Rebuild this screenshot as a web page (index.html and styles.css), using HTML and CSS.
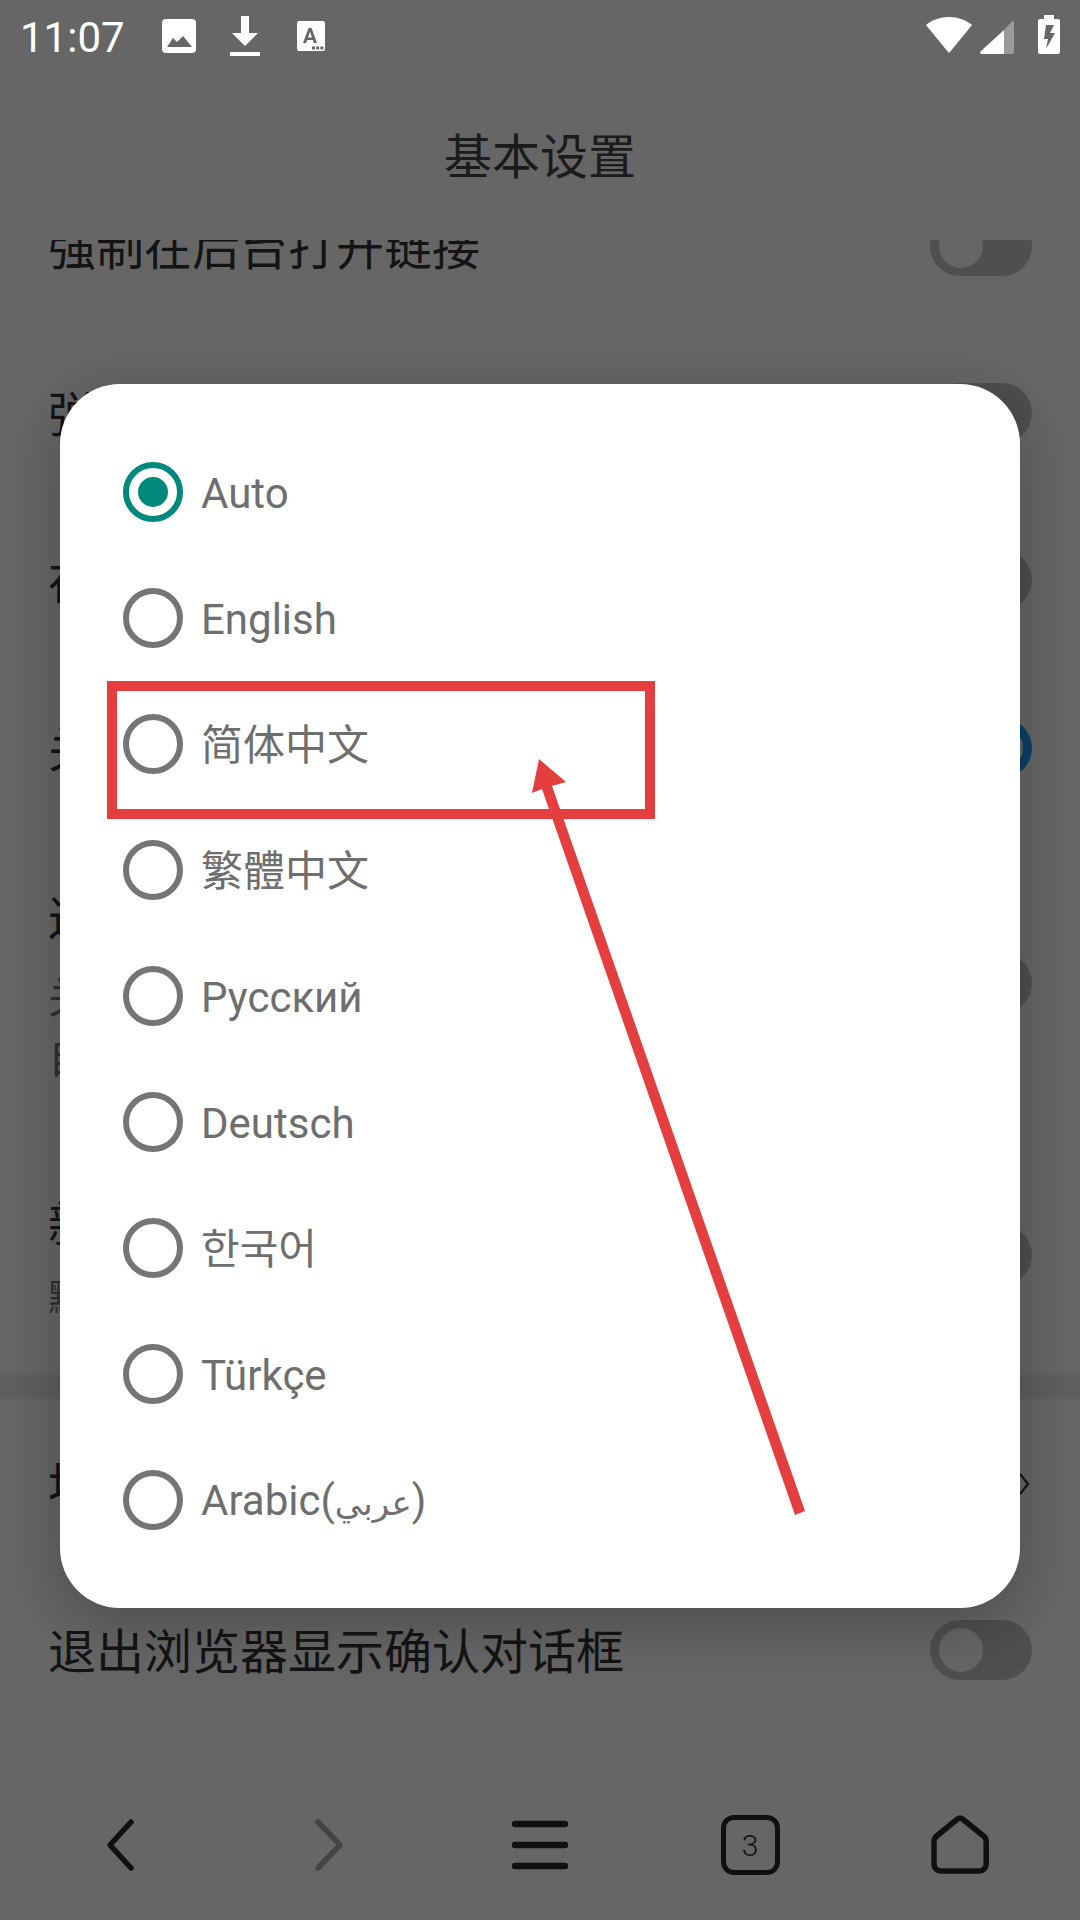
FILE: index.html
```html
<!DOCTYPE html>
<html lang="zh-CN">
  <head>
    <meta charset="UTF-8" />
    <meta name="viewport" content="width=device-width, initial-scale=1.0" />
    <title>基本设置</title>
    <link rel="stylesheet" href="styles.css">
  </head>
  <body>
    <div class="screen">
      <header class="statusbar">
        <div class="status-left">
          <span class="clock">11:07</span>
          <svg width="34" height="34" viewBox="0 0 34 34"><path fill="#fff" fill-rule="evenodd" d="M4 0h26a4 4 0 0 1 4 4v26a4 4 0 0 1-4 4H4a4 4 0 0 1-4-4V4a4 4 0 0 1 4-4zM5 28h25L21 17l-6 6-4-4z"/></svg>
          <svg class="ico-download" width="30" height="40" viewBox="0 0 30 40"><path fill="#fff" d="M11 0h8v17h9L15 30 2 17h9zM0 36h30v4H0z"/></svg>
          <svg class="ico-font" width="28" height="30" viewBox="0 0 28 30"><path fill="#fff" fill-rule="evenodd" d="M2 0h24a2 2 0 0 1 2 2v26a2 2 0 0 1-2 2H2a2 2 0 0 1-2-2V2a2 2 0 0 1 2-2zM11.500 7 6 22h3.200l1-3h5.600l1 3H20L14.500 7zM11.100 16.500 13 10.500l1.900 6zM15 25.500h3v3h-3zM19.200 25.500h3v3h-3zM23.400 25.500h3v3h-3z"/></svg>
        </div>
        <div class="status-right">
          <svg class="ico-wifi" width="46" height="36" viewBox="0 0 46 36"><path fill="#fff" d="M23 0c9 0 17 3 23 8L24 35a1.300 1.300 0 0 1-2 0L0 8c6-5 14-8 23-8z"/></svg>
          <svg class="ico-signal" width="34" height="34" viewBox="0 0 34 34"><path fill="#fff" fill-opacity=".35" d="M24 10 32 1.500c1-1 2-.5 2 1V32a2 2 0 0 1-2 2h-8z"/><path fill="#fff" d="M24 10v24H2c-2 0-2.500-1.500-1-3z"/></svg>
          <svg class="ico-battery" width="22" height="39" viewBox="0 0 22 39"><path fill="#fff" fill-rule="evenodd" d="M6 0h10v4h4a2 2 0 0 1 2 2v31a2 2 0 0 1-2 2H2a2 2 0 0 1-2-2V6a2 2 0 0 1 2-2h4zM8 10 6 24h4l-2 10 9-16h-5l4-8z"/></svg>
        </div>
      </header>

      <h1 class="title">基本设置</h1>

      <div class="settings">
        <div class="row row-a">
          <div class="row-text">强制在后台打开链接</div>
          <span class="switch"></span>
        </div>
        <div class="row row-b">
          <div class="row-text">弹出窗口</div>
          <span class="switch"></span>
        </div>
        <div class="row row-c">
          <div class="row-text">在后台打开</div>
          <span class="switch"></span>
        </div>
        <div class="row row-d">
          <div class="row-text">关闭标签页</div>
          <span class="switch on"></span>
        </div>
        <div class="row row-e">
          <div class="row-body">
            <div class="row-text">返回</div>
            <div class="row-sub">关闭标签页<br>自动返回</div>
          </div>
          <span class="switch"></span>
        </div>
        <div class="row row-f">
          <div>
            <div class="row-text">新标签页</div>
            <div class="row-sub small">默认</div>
          </div>
          <span class="switch"></span>
        </div>
        <div class="band"></div>
        <div class="row row-g">
          <div class="row-text">地址栏</div>
          <svg width="12" height="24" viewBox="0 0 12 24"><path fill="none" stroke="#444" stroke-width="2.5" d="M2 2l8 10-8 10"/></svg>
        </div>
        <div class="row row-h">
          <div class="row-text">退出浏览器显示确认对话框</div>
          <span class="switch"></span>
        </div>
      </div>

      <nav class="toolbar">
        <svg width="60" height="60" viewBox="0 0 60 60"><path class="nav-line" d="M41 7 20 30l21 23"/></svg>
        <svg width="60" height="60" viewBox="0 0 60 60"><path class="nav-line nav-off" d="M18 7l22 23-22 23"/></svg>
        <svg width="60" height="60" viewBox="0 0 60 60"><path class="nav-line nav-bar" d="M5 9h50M5 30h50M5 51h50"/></svg>
        <div class="tabs-btn">3</div>
        <svg width="60" height="60" viewBox="0 0 60 60"><path class="nav-line" d="M27.500 4a4 4 0 0 1 5 0L53.500 21a7 7 0 0 1 2.700 5.500V49a7 7 0 0 1-7 7H11a7 7 0 0 1-7-7V26.500A7 7 0 0 1 6.700 21z"/></svg>
      </nav>

      <div class="scrim"></div>

      <div class="dialog">
        <div class="option"><span class="radio checked"></span>Auto</div>
        <div class="option"><span class="radio"></span>English</div>
        <div class="option"><span class="radio"></span>简体中文</div>
        <div class="option"><span class="radio"></span>繁體中文</div>
        <div class="option"><span class="radio"></span>Русский</div>
        <div class="option"><span class="radio"></span>Deutsch</div>
        <div class="option"><span class="radio"></span>한국어</div>
        <div class="option"><span class="radio"></span>Türkçe</div>
        <div class="option"><span class="radio"></span><span>Arabic(<span class="arabic">عربي</span>)</span></div>
      </div>

      <div class="mark-box"></div>
      <svg class="mark-arrow" width="1080" height="1920" viewBox="0 0 1080 1920">
        <path fill="#e53e3e" d="M539 759 566 782 552 786 805 1511 795 1515 542 789 532 793z"/>
      </svg>
    </div>
  </body>
</html>
```

FILE: styles.css
```css
* { box-sizing: border-box; }
html, body { margin: 0; padding: 0; }
body { width: 1080px; height: 1920px; overflow: hidden; background: #fff; font-family: Roboto, "Noto Sans CJK SC", sans-serif; }

.screen { position: relative; display: flex; flex-direction: column; width: 1080px; height: 1920px; background: #fff; }

.statusbar { position: relative; z-index: 3; display: flex; align-items: center; justify-content: space-between; flex: none; height: 72px; padding: 0 20px; color: #fff; }
.status-left { display: flex; align-items: center; }
.clock { width: 142px; padding-top: 3px; font-size: 42px; line-height: 69px; }
.ico-download { margin-left: 34px; }
.ico-font { margin-left: 37px; }
.status-right { display: flex; align-items: center; }
.ico-wifi { margin: 0 8px 2px 0; }
.ico-signal { margin: 2px 24px 0 0; }
.ico-battery { margin-bottom: 3px; }

.title { flex: none; height: 168px; margin: 0; font-family: "Noto Sans CJK SC", sans-serif; font-size: 48px; font-weight: 400; line-height: 163px; text-align: center; color: #444; }

.settings { display: flex; flex-direction: column; flex: 1; overflow: hidden; font-family: "Noto Sans CJK SC", sans-serif; color: #333; }
.row { display: flex; align-items: center; justify-content: space-between; flex: none; height: 60px; padding: 0 48px; }
.row-text { padding-bottom: 4px; font-size: 48px; line-height: 60px; white-space: nowrap; }
.row-sub { margin-top: 16px; font-size: 42px; line-height: 60px; color: #777; }
.row-sub.small { margin-top: 15px; font-size: 36px; line-height: 50px; }
.row-body { margin-top: 4px; }
.row-a { margin-top: -24px; }
.row-b { margin-top: 107px; }
.row-c { margin-top: 107px; }
.row-d { margin-top: 108px; }
.row-e { height: 200px; margin-top: 105px; }
.row-f { height: 130px; margin-top: 107px; }
.band { flex: none; height: 24px; margin-top: 55px; background: #eee; }
.row-g { margin-top: 55px; padding-right: 50px; }
.row-h { margin-top: 106px; }

.switch { position: relative; flex: none; width: 102px; height: 60px; border-radius: 30px; background: #c5c5c5; }
.switch::after { content: ""; position: absolute; top: 8px; left: 9px; width: 44px; height: 44px; border-radius: 50%; background: #fff; }
.switch.on { background: #1a9fff; }
.switch.on::after { left: 49px; }

.toolbar { display: grid; grid-template-columns: repeat(5, 1fr); flex: none; align-items: center; justify-items: center; height: 150px; padding: 0 15px; }
.nav-line { fill: none; stroke: #2a2a2a; stroke-width: 5.5; stroke-linecap: round; stroke-linejoin: round; }
.nav-off { stroke: #aaa; }
.nav-bar { stroke-width: 6.5; }
.tabs-btn { display: flex; align-items: center; justify-content: center; width: 59px; height: 60px; border: 5.5px solid #2a2a2a; border-radius: 13px; font-size: 30px; font-weight: 300; color: #2a2a2a; }

.scrim { position: absolute; inset: 0; z-index: 1; background: rgba(0, 0, 0, 0.6); }

.dialog { position: absolute; top: 384px; left: 60px; z-index: 2; width: 960px; padding: 45px 0; border-radius: 60px; background: #fff; box-shadow: 0 16px 60px rgba(0, 0, 0, 0.25); }
.option { display: flex; align-items: center; height: 126px; padding: 3px 0 0 63px; font-size: 42px; line-height: 60px; color: #6e6e6e; font-family: Roboto, "Noto Sans CJK SC", "Noto Sans CJK KR", "DejaVu Sans", sans-serif; }
.radio { flex: none; width: 60px; height: 60px; margin: -3px 18px 0 0; border: 6px solid #757575; border-radius: 50%; }
.radio.checked { position: relative; border-color: #00897b; }
.radio.checked::after { content: ""; position: absolute; top: 9px; left: 9px; width: 30px; height: 30px; border-radius: 50%; background: #00897b; }
.arabic { font-size: 34px; }

.mark-box { position: absolute; top: 681px; left: 107px; z-index: 4; width: 548px; height: 138px; border: 10px solid #e53e3e; }
.mark-arrow { position: absolute; top: 0; left: 0; z-index: 5; pointer-events: none; }
```
